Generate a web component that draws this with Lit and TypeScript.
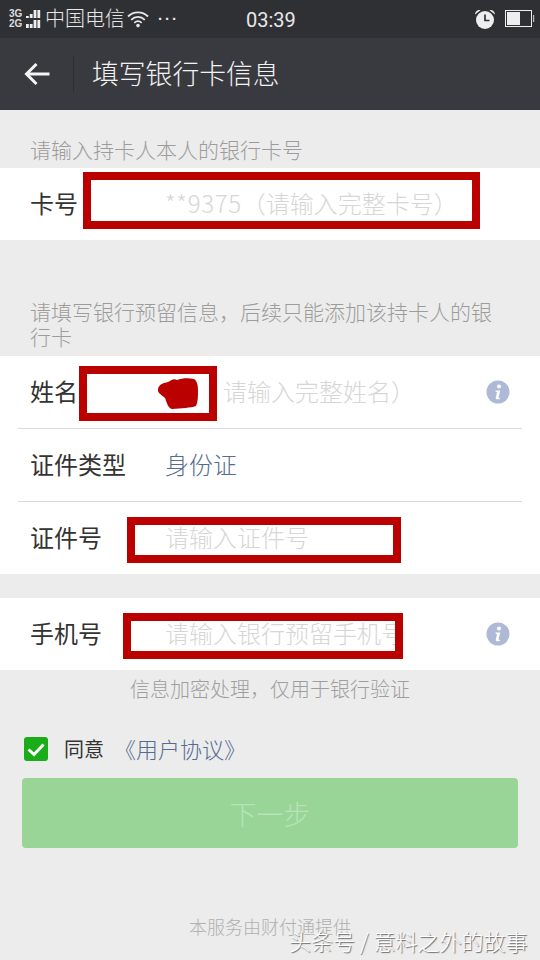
import { LitElement, html, css, svg } from "lit";
import { customElement } from "lit/decorators.js";

const info = html`<svg class="info" viewBox="0 0 24 24" width="24" height="24">
  <circle cx="12" cy="12" r="11.5" fill="#adb9d6"/>
  <circle cx="13" cy="6.5" r="2" fill="#fff"/>
  <path d="M9.6 10.4h4.6l-1.6 7.2c-.1.5.3.6 1.5.1l-.2 1c-2.2 1-4.6 1-4.1-1.2l1.2-5.6-1.6-.3z" fill="#fff"/>
</svg>`;

const bars = (h: number[]) => svg`${h.map((v, i) => svg`<rect x=${i * 3.8} y=${8 - v} width="2.8" height=${v} fill="#eee"/>`)}`;

@customElement("app-root")
export class AppRoot extends LitElement {
  static styles = css`
    :host {
      display: block;
      width: 540px;
      height: 960px;
      background: #ececec;
      overflow: hidden;
      position: relative;
      font-family: "Noto Sans CJK SC", "Liberation Sans", sans-serif;
      font-weight: 300;
    }
    .status {
      height: 38px;
      background: #2f3034;
      color: #e8e8e8;
      display: flex;
      align-items: center;
      position: relative;
      padding-left: 9px;
      box-sizing: border-box;
    }
    .net {
      display: grid;
      grid-template-columns: 17px 16px;
      font: 700 10px/10px "Liberation Sans", sans-serif;
      width: 36px;
      color: #ddd;
    }
    .net svg { display: block; margin-top: 1px; }
    .carrier { font-size: 20px; line-height: 36px; width: 82px; height: 38px; }
    .dots { margin-left: 9px; letter-spacing: 2px; font: 700 15px/38px "Liberation Sans", sans-serif; margin-top: -1px; }
    .time {
      font: 400 20px/38px "Roboto", "Liberation Sans", sans-serif;
      position: absolute;
      left: 246px;
      top: 1px;
    }
    .right { margin-left: auto; display: flex; align-items: center; gap: 9px; padding-right: 5px; }
    .nav {
      height: 72px;
      background: #393a3f;
      display: flex;
      align-items: center;
      padding-left: 24px;
      box-sizing: border-box;
    }
    .div { width: 1px; height: 36px; background: #2d2e32; margin: 0 18px 0 23px; }
    .title { font-size: 26.8px; color: #f2f2f2; line-height: 72px; height: 72px; margin-top: -2px; }
    .tip {
      color: #9c9c9c;
      font-size: 21px;
      line-height: 25px;
      padding: 0 30px;
      box-sizing: border-box;
    }
    .tip.first { padding-top: 27px; height: 58px; }
    .tip.second { padding-top: 59px; height: 116px; }
    .group { background: #fff; }
    .row {
      height: 72px;
      display: flex;
      align-items: center;
      padding: 0 30px 4px;
      box-sizing: border-box;
      position: relative;
      font-size: 24px;
      color: #333;
    }
    .sep { height: 1px; background: #d9d9d9; margin: 0 18px; }
    .label { width: 135px; flex: none; font-weight: 400; }
    .ph { color: #d6d6d6; flex: 1; white-space: nowrap; }
    .ph.name { padding-left: 58px; }
    .num { letter-spacing: 0.7px; }
    .link { color: #566b90; }
    .info { flex: none; margin-top: 4px; }
    .mask {
      position: absolute;
      box-sizing: border-box;
      border: 8px solid #bb0000;
    }
    .mask.one { left: 83px; top: 4px; width: 397px; height: 57px; }
    .mask.two { left: 79px; top: 10px; width: 138px; height: 55px; background: #fff; }
    .mask.three { left: 127px; top: 15px; width: 274px; height: 46px; }
    .mask.four { left: 123px; top: 15px; width: 280px; height: 46px; }
    .blob { position: absolute; left: 158px; top: 22px; }
    .gap { height: 24px; }
    .note {
      text-align: center;
      color: #9e9e9e;
      font-size: 20px;
      line-height: 38px;
      height: 40px;
    }
    .agree {
      display: flex;
      align-items: center;
      padding-left: 24px;
      height: 40px;
      margin-top: 19px;
      font-size: 20px;
      color: #333;
    }
    .agree span { position: relative; top: -1px; }
    .agree > span:first-of-type { font-weight: 400; }
    .check { flex: none; margin-right: 16px; }
    .agree .link { margin-left: 10px; font-size: 22px; }
    .btn {
      margin: 9px 22px 0;
      height: 70px;
      border-radius: 4px;
      background: #98d597;
      color: #b8e3b7;
      font-size: 27px;
      display: flex;
      align-items: center;
      justify-content: center;
    }
    .foot {
      text-align: center;
      color: #b0b0b0;
      font-size: 18px;
      line-height: 26px;
      margin-top: 65px;
    }
    .mark {
      position: absolute;
      left: 289px;
      top: 924px;
      font-size: 22px;
      line-height: 32px;
      color: #fff;
      white-space: nowrap;
      text-shadow: 1px 1px 1px rgba(60, 60, 60, 0.75);
    }
  `;

  render() {
    return html`
      <div class="status">
        <div class="net">
          <span>3G</span>
          <svg width="16" height="9" viewBox="0 0 16 9">${bars([2, 4, 8, 8])}</svg>
          <span>2G</span>
          <svg width="16" height="9" viewBox="0 0 16 9">${bars([4, 4, 8, 8])}</svg>
        </div>
        <div class="carrier">中国电信</div>
        <svg width="22" height="18" viewBox="0 0 22 18" fill="none" stroke="#e8e8e8" stroke-width="1.8">
          <path d="M1 6.5C6.5 1 15.5 1 21 6.5"/>
          <path d="M4.2 9.8C8 6 14 6 17.8 9.8"/>
          <path d="M7.3 12.8C9.5 10.8 12.5 10.8 14.7 12.8"/>
          <circle cx="11" cy="15.6" r="1.8" fill="#e8e8e8" stroke="none"/>
        </svg>
        <div class="dots">···</div>
        <div class="time">03:39</div>
        <div class="right">
          <svg width="22" height="20" viewBox="0 0 22 20">
            <circle cx="11" cy="11" r="9" fill="#eee"/>
            <path d="M1 5.5C1 2.5 4 .5 6.5 1.2zM21 5.5C21 2.5 18 .5 15.5 1.2z" fill="#eee"/>
            <path d="M11 5.5v6h4.5" fill="none" stroke="#2f3034" stroke-width="1.7"/>
          </svg>
          <svg width="30" height="18" viewBox="0 0 30 18">
            <rect x=".5" y=".5" width="26" height="16" fill="none" stroke="#eee"/>
            <rect x="2" y="2" width="13" height="13" fill="#eee"/>
            <rect x="28" y="5" width="1.2" height="7" fill="#bbb"/>
          </svg>
        </div>
      </div>
      <div class="nav">
        <svg width="26" height="24" viewBox="0 0 26 24" fill="none" stroke="#f4f4f4" stroke-width="3">
          <path d="M25.5 12H3"/>
          <path d="M12.5 2 2.5 12l10 10"/>
        </svg>
        <div class="div"></div>
        <div class="title">填写银行卡信息</div>
      </div>
      <div class="tip first">请输入持卡人本人的银行卡号</div>
      <div class="group">
        <div class="row">
          <span class="label">卡号</span>
          <span class="ph"><span class="num">**9375</span>（请输入完整卡号）</span>
          <div class="mask one"></div>
        </div>
      </div>
      <div class="tip second">请填写银行预留信息，后续只能添加该持卡人的银行卡</div>
      <div class="group">
        <div class="row">
          <span class="label">姓名</span>
          <span class="ph name">请输入完整姓名）</span>
          ${info}
          <div class="mask two"></div>
          <svg class="blob" width="40" height="31" viewBox="0 0 40 31">
            <path d="M0 11C1 6 6 5 10 4 13 3 15 0 19 2 24 0 31 0 36 1 39 3 40 7 40 12 40 18 40 24 38 28 32 30 24 30 14 31 10 30 9 25 7 20 4 17 -1 15 0 11z" fill="#bb0000"/>
          </svg>
        </div>
        <div class="sep"></div>
        <div class="row">
          <span class="label">证件类型</span>
          <span class="link">身份证</span>
        </div>
        <div class="sep"></div>
        <div class="row">
          <span class="label">证件号</span>
          <span class="ph">请输入证件号</span>
          <div class="mask three"></div>
        </div>
      </div>
      <div class="gap"></div>
      <div class="group">
        <div class="row">
          <span class="label">手机号</span>
          <span class="ph">请输入银行预留手机号</span>
          ${info}
          <div class="mask four"></div>
        </div>
      </div>
      <div class="note">信息加密处理，仅用于银行验证</div>
      <div class="agree">
        <svg class="check" width="24" height="24" viewBox="0 0 24 24">
          <rect width="24" height="24" rx="3" fill="#1aad19"/>
          <path d="M4.5 12.5 10 17.5 19.5 7.5" fill="none" stroke="#fff" stroke-width="3"/>
        </svg>
        <span>同意</span>
        <span class="link">《用户协议》</span>
      </div>
      <div class="btn">下一步</div>
      <div class="foot">本服务由财付通提供</div>
      <div class="mark">头条号 / 意料之外的故事</div>
    `;
  }
}
